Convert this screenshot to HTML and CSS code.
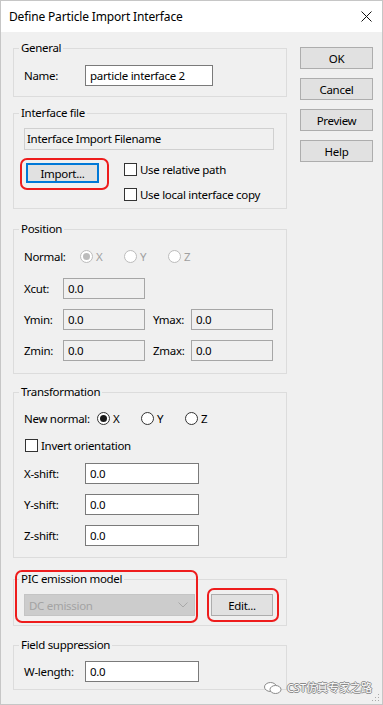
FILE: index.html
```html
<!DOCTYPE html>
<html lang="en">
<head>
  <meta charset="UTF-8">
  <title>Define Particle Import Interface</title>
  <link rel="stylesheet" href="styles.css">
</head>
<body>

  <div class="window">
    <div class="titlebar">
      <span class="title">Define Particle Import Interface</span>
      <svg class="close" width="11" height="11" viewBox="0 0 11 11">
        <path d="M0.5 0.5 L10.5 10.5 M10.5 0.5 L0.5 10.5" stroke="#111" stroke-width="1" fill="none"/>
      </svg>
    </div>

    <div class="content">
      <div class="main">

        <fieldset class="group general">
          <legend>General</legend>
          <div class="row">
            <span class="lbl w61">Name:</span>
            <input class="field name" type="text" value="particle interface 2">
          </div>
        </fieldset>

        <fieldset class="group iface">
          <legend>Interface file</legend>
          <div class="filename">Interface Import Filename</div>
          <div class="import-row">
            <span class="hl">
              <button class="btn import">Import...</button>
              <span class="mark m-import"></span>
            </span>
            <div class="checks">
              <div class="check"><span class="box"></span>Use relative path</div>
              <div class="check"><span class="box"></span>Use local interface copy</div>
            </div>
          </div>
        </fieldset>

        <fieldset class="group position">
          <legend>Position</legend>
          <div class="row r20">
            <span class="lbl w56">Normal:</span>
            <span class="radio off"><span class="dot on"></span>X</span>
            <span class="radio off"><span class="dot"></span>Y</span>
            <span class="radio off"><span class="dot"></span>Z</span>
          </div>
          <div class="row mt12">
            <span class="lbl w39">Xcut:</span>
            <input class="field pos" type="text" value="0.0">
          </div>
          <div class="row mt10">
            <span class="lbl w39">Ymin:</span>
            <input class="field pos" type="text" value="0.0">
            <span class="lbl w38 ml8">Ymax:</span>
            <input class="field pos" type="text" value="0.0">
          </div>
          <div class="row mt10">
            <span class="lbl w39">Zmin:</span>
            <input class="field pos" type="text" value="0.0">
            <span class="lbl w38 ml8">Zmax:</span>
            <input class="field pos" type="text" value="0.0">
          </div>
        </fieldset>

        <fieldset class="group transform">
          <legend>Transformation</legend>
          <div class="row r20">
            <span class="lbl w73">New normal:</span>
            <span class="radio"><span class="dot on"></span>X</span>
            <span class="radio"><span class="dot"></span>Y</span>
            <span class="radio"><span class="dot"></span>Z</span>
          </div>
          <div class="row r20 mt7">
            <div class="check invert"><span class="box"></span>Invert orientation</div>
          </div>
          <div class="row mt8">
            <span class="lbl w61">X-shift:</span>
            <input class="field shift" type="text" value="0.0">
          </div>
          <div class="row mt10">
            <span class="lbl w61">Y-shift:</span>
            <input class="field shift" type="text" value="0.0">
          </div>
          <div class="row mt10">
            <span class="lbl w61">Z-shift:</span>
            <input class="field shift" type="text" value="0.0">
          </div>
        </fieldset>

        <fieldset class="group pic">
          <legend>PIC emission model</legend>
          <span class="mark m-pic"></span>
          <div class="row r22">
            <div class="combo">
              <span>DC emission</span>
              <svg width="10" height="6" viewBox="0 0 10 6">
                <path d="M0.5 0.5 L5 5 L9.5 0.5" stroke="#a8a8a8" stroke-width="1" fill="none"/>
              </svg>
            </div>
            <span class="hl edit-wrap">
              <button class="btn edit">Edit...</button>
              <span class="mark m-edit"></span>
            </span>
          </div>
        </fieldset>

        <fieldset class="group field-sup">
          <legend>Field suppression</legend>
          <div class="row">
            <span class="lbl w61">W-length:</span>
            <input class="field shift" type="text" value="0.0">
          </div>
        </fieldset>

      </div>

      <div class="side">
        <button class="btn">OK</button>
        <button class="btn">Cancel</button>
        <button class="btn">Preview</button>
        <button class="btn">Help</button>
      </div>
    </div>

    <!-- watermark -->
    <div class="wm">
      <svg width="18" height="12" viewBox="0 0 18 12">
        <ellipse cx="6.5" cy="5" rx="6" ry="4.5" fill="#fff" stroke="#8a8a8a" stroke-width="1"/>
        <ellipse cx="11.5" cy="7.5" rx="5.5" ry="4" fill="#fff" stroke="#8a8a8a" stroke-width="1"/>
      </svg>
      <span>CST仿真专家之路</span>
    </div>

    <svg class="grip" width="8" height="8" viewBox="0 0 8 8">
      <rect x="6" y="0" width="1" height="1" fill="#aaa"/>
      <rect x="3" y="3" width="1" height="1" fill="#aaa"/>
      <rect x="6" y="3" width="1" height="1" fill="#aaa"/>
      <rect x="0" y="6" width="1" height="1" fill="#aaa"/>
      <rect x="3" y="6" width="1" height="1" fill="#aaa"/>
      <rect x="6" y="6" width="1" height="1" fill="#aaa"/>
    </svg>
  </div>

</body>
</html>
```

FILE: styles.css
```css
body {
  margin: 0;
  background-color: #ffffff;
  font-family: "Noto Sans", "Open Sans", sans-serif;
  font-size: 11.5px;
  letter-spacing: -0.3px;
  color: #000;
}
.window {
  position: relative;
  width: 383px;
  height: 705px;
  box-sizing: border-box;
  border: 1px solid #c6c6c6;
  background-color: #f0f0f0;
}
.titlebar {
  height: 31px;
  background-color: #ffffff;
  display: flex;
  align-items: center;
  justify-content: space-between;
  padding: 0 10px 0 8px;
}
.title {
  font-size: 12px;
  letter-spacing: -0.15px;
}
.content {
  display: flex;
  padding: 8px 0 0 12px;
}
.main {
  width: 274px;
  display: flex;
  flex-direction: column;
}
.side {
  width: 73px;
  margin: 7px 0 0 13px;
  display: flex;
  flex-direction: column;
  gap: 9px;
}
.btn {
  height: 22px;
  padding: 0;
  font: inherit;
  letter-spacing: inherit;
  color: #000;
  background-color: #e1e1e1;
  border: 1px solid #adadad;
}

/* group boxes */
.group {
  position: relative;
  margin: 0;
  padding: 0 10px;
  min-width: 0;
  border: 1px solid #dcdcdc;
}
.group legend {
  padding: 0 2px;
  margin-left: -5px;
  line-height: 16px;
}
.general {
  padding-top: 9px;
  padding-bottom: 10px;
}
.iface {
  margin-top: 8px;
  padding-top: 7px;
  padding-bottom: 7px;
}
.position {
  margin-top: 12px;
  padding-top: 9px;
  padding-bottom: 12px;
}
.transform {
  margin-top: 10px;
  padding-top: 8px;
  padding-bottom: 11px;
}
.pic {
  margin-top: 13px;
  padding-top: 7px;
  padding-bottom: 9px;
}
.field-sup {
  margin-top: 11px;
  padding-top: 8px;
  padding-bottom: 7px;
}

/* rows */
.row {
  display: flex;
  align-items: center;
  height: 21px;
}
.r20 { height: 20px; }
.r22 { height: 22px; }
.mt7 { margin-top: 7px; }
.mt8 { margin-top: 8px; }
.mt10 { margin-top: 10px; }
.mt12 { margin-top: 12px; }
.ml8 { margin-left: 8px; }
.lbl { flex: none; }
.w38 { width: 38px; }
.w39 { width: 39px; }
.w56 { width: 56px; }
.w61 { width: 61px; }
.w73 { width: 73px; }

.field {
  box-sizing: border-box;
  height: 21px;
  padding: 0 4px;
  font: inherit;
  letter-spacing: inherit;
  color: #000;
  background-color: #ffffff;
  border: 1px solid #7a7a7a;
  outline: none;
}
.name { width: 128px; }
.shift { width: 114px; }
.pos {
  width: 82px;
  background-color: #f0f0f0;
  border-color: #a6a6a6;
}

.filename {
  box-sizing: border-box;
  width: 250px;
  height: 22px;
  padding: 0 2px;
  line-height: 20px;
  background-color: #f0f0f0;
  border: 1px solid #d0d0d0;
}
.import-row {
  display: flex;
  align-items: flex-start;
  margin-top: 13px;
}
.import {
  width: 73px;
  height: 20px;
  margin-left: 2px;
  border: 2px solid #0078d7;
  display: block;
}
.checks {
  margin-left: 25px;
  display: flex;
  flex-direction: column;
  gap: 12px;
}
.check {
  display: flex;
  align-items: center;
  height: 13px;
}
.invert {
  margin-left: 1px;
}
.box {
  width: 13px;
  height: 13px;
  box-sizing: border-box;
  margin-right: 3px;
  background-color: #ffffff;
  border: 1px solid #333;
}

.radio {
  width: 44px;
  display: flex;
  align-items: center;
}
.dot {
  width: 13px;
  height: 13px;
  box-sizing: border-box;
  margin-right: 3px;
  border: 1px solid #333;
  border-radius: 50%;
  background-color: #ffffff;
  display: flex;
  align-items: center;
  justify-content: center;
}
.dot.on::after {
  content: "";
  width: 7px;
  height: 7px;
  border-radius: 50%;
  background-color: #1a1a1a;
}
.radio.off {
  color: #a0a0a0;
}
.radio.off .dot {
  border-color: #bcbcbc;
}
.radio.off .dot.on::after {
  background-color: #bcbcbc;
}

.combo {
  box-sizing: border-box;
  width: 171px;
  height: 22px;
  padding: 0 6px 0 4px;
  display: flex;
  align-items: center;
  justify-content: space-between;
  color: #a3a3a3;
  background-color: #cccccc;
  border: 1px solid #c4c4c4;
}
.edit-wrap {
  margin-left: 16px;
}
.edit {
  width: 62px;
  display: block;
}

/* red highlight marks */
.hl {
  position: relative;
  display: block;
}
.mark {
  position: absolute;
  border: 2px solid #ee1c1c;
  border-radius: 7px;
  pointer-events: none;
}
.m-import {
  top: -5px;
  right: -10px;
  bottom: -7px;
  left: -4px;
}
.m-edit {
  top: -6px;
  right: -6px;
  bottom: -6px;
  left: -4px;
}
.m-pic {
  left: 1px;
  bottom: 2px;
  width: 183px;
  height: 53px;
  box-sizing: border-box;
}

.wm {
  position: absolute;
  right: 10px;
  bottom: 9px;
  display: flex;
  align-items: center;
  gap: 5px;
  font-family: "Noto Sans", "Noto Sans CJK SC", sans-serif;
  font-size: 11px;
  letter-spacing: 0;
  line-height: 14px;
  color: #ffffff;
  text-shadow: 1px 0 0 #8a8a8a, -1px 0 0 #8a8a8a, 0 1px 0 #8a8a8a, 0 -1px 0 #8a8a8a;
}
.grip {
  position: absolute;
  right: 2px;
  bottom: 2px;
}
```
